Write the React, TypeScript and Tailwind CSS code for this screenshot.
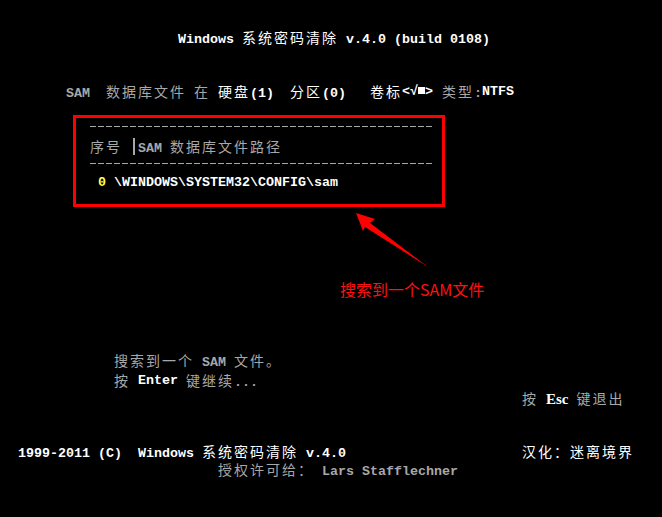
import React from "react";

// CJK runs get a 16px cell, ASCII runs an 8px one, like the DOS text screen
const CJK = /([\u2E80-\u9FFF\u3000-\u303F\uFF00-\uFFEF]+)/;

function T({ children, className = "" }: { children: string; className?: string }) {
  const parts = children.split(CJK);
  return (
    <span className={className}>
      {parts.map((p, i) =>
        i % 2 ? (
          <span
            key={i}
            className="font-['Noto_Sans_CJK_SC',sans-serif] text-[14px] font-normal tracking-[2px]"
          >
            {p}
          </span>
        ) : (
          <span key={i}>{p}</span>
        )
      )}
    </span>
  );
}

const gray = "text-[#a8a8a8]";
const white = "text-white";

function Dashes() {
  return (
    <div className="h-px w-[344px] bg-[repeating-linear-gradient(90deg,#a8a8a8_0_6px,transparent_6px_8px)]" />
  );
}

export default function App() {
  return (
    <div className="relative h-[517px] w-[662px] overflow-hidden bg-black font-['Liberation_Mono',monospace] text-[13.333px] font-bold leading-[18px] whitespace-pre">
      {/* title */}
      <div className="mt-[29px] flex h-[18px] items-center pl-[178px]">
        <T className={white}>Windows 系统密码清除 v.4.0 (build 0108)</T>
      </div>

      {/* disk info */}
      <div className="mt-[36px] flex h-[18px] items-center pl-[66px]">
        <T className={gray}>SAM  数据库文件 在 </T>
        <T className={white}>硬盘(1)  分区(0)   卷标</T>
        <span className="inline-flex w-[32px] items-center text-white">
          &lt;<span className="inline-block w-[8px] text-center">√</span>
          <span className="mb-[3px] inline-block h-[7px] w-[7px] bg-white" />
          &gt;
        </span>
        <T className={gray}> 类型:</T>
        <T className={white}>NTFS</T>
      </div>

      {/* result box */}
      <div className="ml-[73px] mt-[14px] h-[92px] w-[372px] border-[3px] border-[#ff0000] pl-[14px] pt-[8px]">
        <Dashes />
        <div className="mt-[11px] flex h-[18px] items-center">
          <T className={gray}>序号 </T>
          <span className="inline-flex h-[18px] w-[8px] justify-center">
            <span className="h-[17px] w-[2px] bg-[#a8a8a8]" />
          </span>
          <T className={gray}>SAM 数据库文件路径</T>
        </div>
        <div className="mt-[7px]">
          <Dashes />
        </div>
        <div className="mt-[10px] flex h-[18px] items-center">
          <span className="text-[#ffff55]"> 0 </span>
          <span className={white}>\WINDOWS\SYSTEM32\CONFIG\sam</span>
        </div>
      </div>

      {/* annotation */}
      <svg className="absolute left-0 top-0" width="662" height="517" viewBox="0 0 662 517">
        <polygon
          points="356,213 375,219 370,223 428,267 365,227 363,231"
          fill="#ff0000"
        />
      </svg>
      <div className="mt-[73px] flex h-[18px] items-center pl-[340px] font-['Noto_Sans_CJK_SC',sans-serif] text-[16px] font-normal text-[#ff1010]">
        搜索到一个SAM文件
      </div>

      {/* status */}
      <div className="mt-[54px] flex h-[18px] items-center pl-[114px]">
        <T className={gray}>搜索到一个 SAM 文件。</T>
      </div>
      <div className="mt-[2px] flex h-[18px] items-center pl-[114px]">
        <T className={gray}>按 </T>
        <span className={white}>Enter</span>
        <T className={gray}> 键继续...</T>
      </div>
      <div className="flex h-[18px] items-center pl-[522px]">
        <T className={gray}>按 </T>
        <span className="font-['Liberation_Serif',serif] text-[15px] text-white">Esc</span>
        <T className={gray}> 键退出</T>
      </div>

      {/* footer */}
      <div className="mt-[35px] flex h-[18px] items-center pl-[18px]">
        <span className="w-[504px]">
          <T className={white}>1999-2011 (C)  Windows 系统密码清除 v.4.0</T>
        </span>
        <T className={white}>汉化：迷离境界</T>
      </div>
      <div className="flex h-[18px] items-center pl-[218px]">
        <T className={gray}>授权许可给： Lars Stafflechner</T>
      </div>
    </div>
  );
}
